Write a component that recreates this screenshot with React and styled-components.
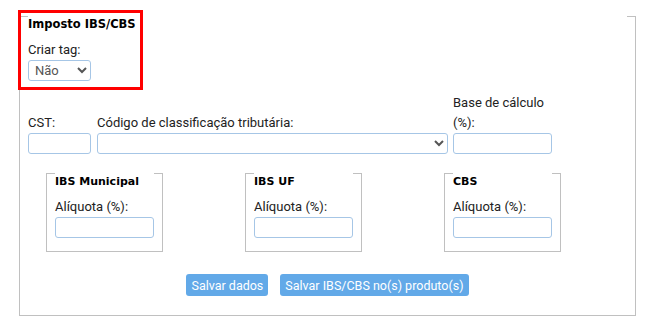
import React from "react";
import styled, { createGlobalStyle } from "styled-components";

const GlobalStyle = createGlobalStyle`
  html, body { margin: 0; padding: 0; background: #fff; }
  body { font-family: Roboto, "Liberation Sans", sans-serif; }
`;

const Page = styled.div`
  position: relative;
  padding: 2px 0 0 19px;
`;

const Fieldset = styled.fieldset`
  box-sizing: border-box;
  margin: 0;
  min-width: 0;
  border: 1px solid #c0c0c0;
  width: ${(p) => (p.$inner ? "117px" : "617px")};
  padding: ${(p) => (p.$inner ? "8px 8px 13px" : "9px 8px 19px")};
`;

const Legend = styled.legend`
  box-sizing: border-box;
  width: 100%;
  padding: ${(p) => (p.$inner ? "18px 0 0" : "15px 0 0")};
  font-family: "DejaVu Sans", Verdana, sans-serif;
  font-weight: bold;
  font-size: ${(p) => (p.$inner ? "11px" : "11.5px")};
  line-height: 14px;
  color: #000;
`;

const Field = styled.div`
  display: flex;
  flex-direction: column;
  width: ${(p) => p.$w}px;
`;

const Label = styled.label`
  display: block;
  font-size: 13px;
  line-height: 20px;
  color: #222;
`;

const TextInput = styled.input`
  box-sizing: border-box;
  width: 100%;
  height: 21px;
  margin: 0;
  padding: 0 4px;
  border: 1px solid #a6c6e6;
  border-radius: 3px;
  background: #fff;
  font: 13px Roboto, sans-serif;
`;

const Select = styled.select`
  box-sizing: border-box;
  width: 100%;
  height: 21px;
  margin: 0;
  padding: 0 2px;
  border: 1px solid #a6c6e6;
  border-radius: 3px;
  background: #fff;
  color: #555;
  font: 13px Roboto, sans-serif;
`;

const Row = styled.div`
  display: flex;
  align-items: flex-end;
  margin-top: 12px;
  gap: 6px;
`;

const BoxRow = styled.div`
  display: flex;
  gap: 82px;
  margin-top: 3px;
  padding-left: 18px;
`;

const Actions = styled.div`
  display: flex;
  justify-content: center;
  gap: 12px;
  margin-top: 22px;
`;

const Button = styled.button`
  height: 22px;
  padding: 0 5px;
  border: none;
  border-radius: 3px;
  background: #62a9e8;
  color: #fff;
  font: 12.5px Roboto, sans-serif;
`;

const Highlight = styled.div`
  position: absolute;
  left: 18px;
  top: 10px;
  width: 125px;
  height: 80px;
  box-sizing: border-box;
  border: 3px solid #f00;
  pointer-events: none;
`;

const taxBoxes = ["IBS Municipal", "IBS UF", "CBS"];

export default function App() {
  return (
    <>
      <GlobalStyle />
      <Page>
        <Fieldset>
          <Legend>Imposto IBS/CBS</Legend>
          <Field $w={63}>
            <Label>Criar tag:</Label>
            <Select defaultValue="nao">
              <option value="nao">Não</option>
              <option value="sim">Sim</option>
            </Select>
          </Field>
          <Row>
            <Field $w={63}>
              <Label>CST:</Label>
              <TextInput />
            </Field>
            <Field $w={351}>
              <Label>Código de classificação tributária:</Label>
              <Select defaultValue="">
                <option value=""></option>
              </Select>
            </Field>
            <Field $w={99} style={{ marginLeft: -1 }}>
              <Label>Base de cálculo (%):</Label>
              <TextInput />
            </Field>
          </Row>
          <BoxRow>
            {taxBoxes.map((t) => (
              <Fieldset $inner key={t}>
                <Legend $inner>{t}</Legend>
                <Label>Alíquota (%):</Label>
                <TextInput />
              </Fieldset>
            ))}
          </BoxRow>
          <Actions>
            <Button>Salvar dados</Button>
            <Button>Salvar IBS/CBS no(s) produto(s)</Button>
          </Actions>
        </Fieldset>
        <Highlight />
      </Page>
    </>
  );
}
